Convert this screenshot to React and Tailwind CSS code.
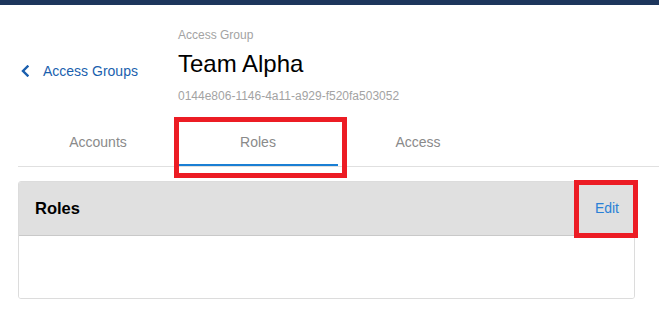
import { useState } from "react";

const TABS = ["Accounts", "Roles", "Access"];

export default function App() {
  const [active, setActive] = useState("Roles");

  return (
    <div className="relative min-h-[325px] w-[659px] overflow-hidden bg-white font-['Liberation_Sans',Arial,sans-serif]">
      {/* Top bar */}
      <div className="h-[5px] bg-[#1d365c]" />

      <div className="pl-[18px]">
        {/* Header */}
        <div className="flex pt-[22px]">
          <a
            href="#"
            className="mt-[34px] flex h-[20px] w-[160px] items-center gap-[14px] pl-[3px] text-[14px] text-[#1a5fae]"
          >
            <svg width="8" height="12" viewBox="0 0 8 12" fill="none">
              <polyline
                points="6.5,1.5 2,6 6.5,10.5"
                stroke="#1a5fae"
                strokeWidth="2.4"
                strokeLinecap="square"
              />
            </svg>
            Access Groups
          </a>
          <div className="flex flex-col">
            <span className="text-[12px] leading-[16px] text-[#a3a3a3]">
              Access Group
            </span>
            <h1 className="mt-[6px] text-[24px] leading-[29px] text-black">
              Team Alpha
            </h1>
            <span className="mt-[10px] text-[12px] leading-[16px] text-[#a3a3a3]">
              0144e806-1146-4a11-a929-f520fa503052
            </span>
          </div>
        </div>

        {/* Tabs */}
        <div className="mt-[14px] flex border-b border-[#e0e0e0]">
          {TABS.map((t) => (
            <button
              key={t}
              type="button"
              onClick={() => setActive(t)}
              className={
                active === t
                  ? "h-[48px] w-[160px] border-b-2 border-[#1a7fd4] pt-[2px] text-[14px] text-[#8a8a8a]"
                  : "h-[48px] w-[160px] border-b-2 border-transparent pt-[2px] text-[14px] text-[#8a8a8a]"
              }
            >
              {t}
            </button>
          ))}
        </div>

        {/* Card */}
        <div className="mt-[14px] w-[617px] overflow-hidden rounded-[3px] border border-[#dcdcdc]">
          <div className="flex h-[54px] items-center justify-between border-b border-[#c9c9c9] bg-[#e0e0e0] pl-[16px] pr-[15px]">
            <h2 className="text-[16.5px] font-bold text-black">Roles</h2>
            <button type="button" className="text-[14px] text-[#2b80d6]">
              Edit
            </button>
          </div>
          <div className="h-[62px] bg-white" />
        </div>
      </div>

      {/* Annotation overlays */}
      <div className="pointer-events-none absolute left-[174px] top-[117px] h-[61px] w-[173px] border-[5px] border-[#ec1c24]" />
      <div className="pointer-events-none absolute left-[574px] top-[180px] h-[58px] w-[64px] border-[5px] border-[#ec1c24]" />
    </div>
  );
}
